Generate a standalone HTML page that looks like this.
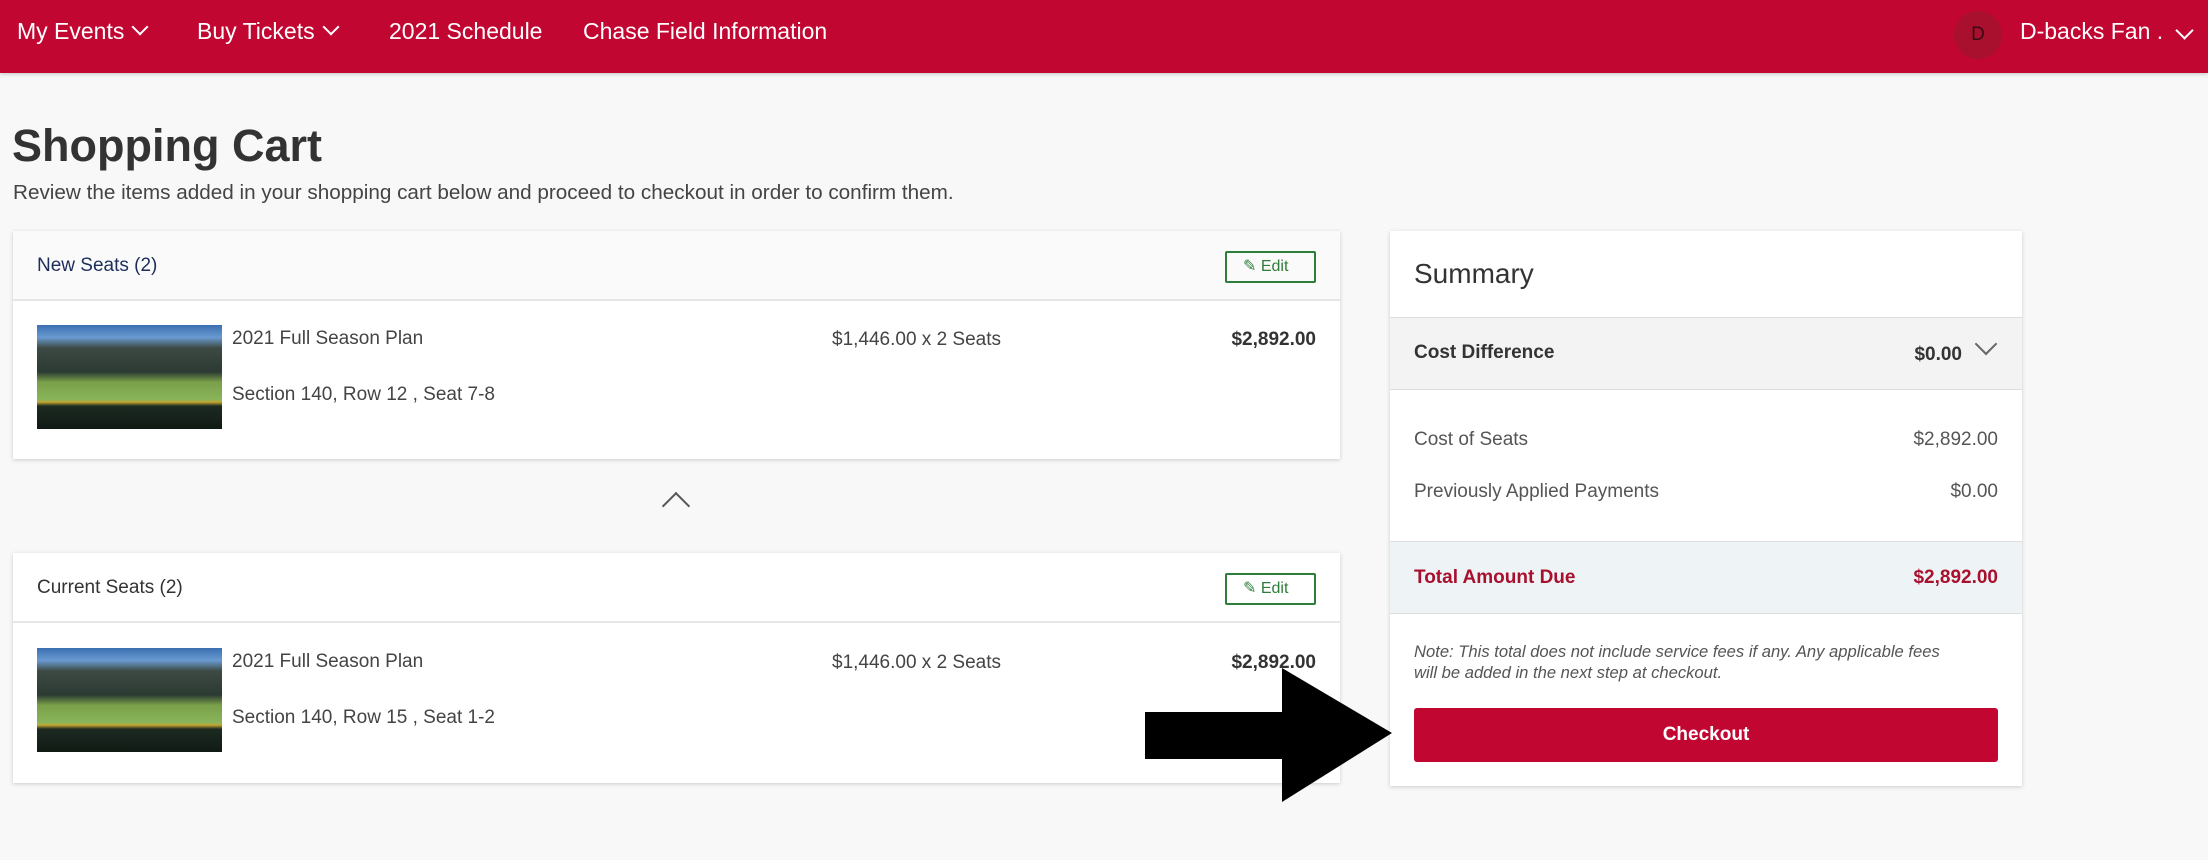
<!DOCTYPE html>
<html><head><meta charset="utf-8"><style>
*{margin:0;padding:0;box-sizing:border-box}
body{width:2208px;height:860px;background:#f8f8f8;font-family:"Liberation Sans",sans-serif;color:#333;position:relative;overflow:hidden}
.abs{position:absolute;white-space:nowrap}
.nav{position:absolute;left:0;top:0;width:2208px;height:73px;background:#c20632;box-shadow:0 2px 3px rgba(0,0,0,.15)}
.nav .i{position:absolute;top:18px;color:#fff;font-size:23px}
.chev{display:inline-block;width:12px;height:12px;border-right:2px solid #fff;border-bottom:2px solid #fff;transform:rotate(45deg);margin-left:10px;position:relative;top:-6px}
.card{position:absolute;background:#fff;box-shadow:0 1px 4px rgba(0,0,0,.18)}
.hd{position:absolute;left:0;right:0;top:0;height:70px;border-bottom:2px solid #e6e6e6;background:#fafafa}
.edit{position:absolute;right:24px;top:20px;width:91px;height:32px;border:2px solid #2e7d3a;border-radius:2px;color:#2e7d3a;font-size:16px;line-height:28px;padding-left:16px}
.img{position:absolute;left:24px;width:185px;height:104px;background:linear-gradient(180deg,#3a6fb0 0%,#6a9ad0 12%,#3d4a44 22%,#2b3a32 45%,#7aa04a 55%,#8ab55a 72%,#c8a830 74%,#1c2a22 78%,#101a14 100%)}
.t{font-size:19px;color:#444}
.row{position:absolute;left:20px;right:20px;font-size:19px;color:#555}
</style></head><body>
<div class="nav">
 <div class="i" style="left:17px">My Events<span class="chev"></span></div>
 <div class="i" style="left:197px">Buy Tickets<span class="chev"></span></div>
 <div class="i" style="left:389px">2021 Schedule</div>
 <div class="i" style="left:583px">Chase Field Information</div>
 <div class="abs" style="left:1954px;top:11px;width:48px;height:48px;border-radius:50%;background:#a8102e;color:#3a0a12;font-size:19px;text-align:center;line-height:48px">D</div>
 <div class="i" style="left:2020px">D-backs Fan .</div>
 <div class="abs" style="left:2178px;top:24px;width:13px;height:13px;border-right:2px solid #fff;border-bottom:2px solid #fff;transform:rotate(45deg)"></div>
</div>
<div class="abs" style="left:12px;top:120px;font-size:45px;font-weight:bold;color:#333">Shopping Cart</div>
<div class="abs" style="left:13px;top:181px;font-size:20.7px;color:#444">Review the items added in your shopping cart below and proceed to checkout in order to confirm them.</div>

<div class="card" style="left:13px;top:231px;width:1327px;height:228px">
 <div class="hd"><div class="abs" style="left:24px;top:24px;font-size:19px;color:#1d2e5a">New Seats (2)</div><div class="edit">✎ Edit</div></div>
 <div class="img" style="top:94px"></div>
 <div class="abs t" style="left:219px;top:97px">2021 Full Season Plan</div>
 <div class="abs t" style="left:219px;top:153px">Section 140, Row 12 , Seat 7-8</div>
 <div class="abs t" style="left:819px;top:98px">$1,446.00 x 2 Seats</div>
 <div class="abs t" style="right:24px;top:98px;font-weight:bold;color:#333">$2,892.00</div>
</div>
<div class="abs" style="left:666px;top:496px;width:20px;height:20px;border-left:2px solid #555;border-top:2px solid #555;transform:rotate(45deg)"></div>
<div class="card" style="left:13px;top:553px;width:1327px;height:230px">
 <div class="hd" style="background:#fff"><div class="abs" style="left:24px;top:24px;font-size:19px;color:#333">Current Seats (2)</div><div class="edit">✎ Edit</div></div>
 <div class="img" style="top:95px"></div>
 <div class="abs t" style="left:219px;top:98px">2021 Full Season Plan</div>
 <div class="abs t" style="left:219px;top:154px">Section 140, Row 15 , Seat 1-2</div>
 <div class="abs t" style="left:819px;top:99px">$1,446.00 x 2 Seats</div>
 <div class="abs t" style="right:24px;top:99px;font-weight:bold;color:#333">$2,892.00</div>
</div>

<div class="card" style="left:1390px;top:231px;width:632px;height:555px">
 <div class="abs" style="left:24px;top:27px;font-size:28px;color:#333">Summary</div>
 <div class="abs" style="left:0;right:0;top:86px;height:73px;background:#f3f3f3;border-top:1px solid #ddd;border-bottom:1px solid #ddd">
  <div class="abs" style="left:24px;top:24px;font-size:19px;font-weight:600;color:#333">Cost Difference</div>
  <div class="abs" style="right:60px;top:26px;font-size:19px;font-weight:600;color:#333">$0.00</div>
  <div class="abs" style="right:28px;top:18px;width:16px;height:16px;border-right:2px solid #666;border-bottom:2px solid #666;transform:rotate(45deg)"></div>
 </div>
 <div class="row" style="top:198px;left:24px;right:24px">Cost of Seats<span style="float:right">$2,892.00</span></div>
 <div class="row" style="top:250px;left:24px;right:24px">Previously Applied Payments<span style="float:right">$0.00</span></div>
 <div class="abs" style="left:0;right:0;top:310px;height:73px;background:#eef3f6;border-top:1px solid #ddd;border-bottom:1px solid #ddd">
  <div class="abs" style="left:24px;top:25px;font-size:19px;font-weight:bold;color:#a8102e;left:24px;right:24px">Total Amount Due<span style="float:right">$2,892.00</span></div>
 </div>
 <div class="abs" style="left:24px;top:410px;font-size:16.6px;font-style:italic;color:#555;line-height:21px">Note: This total does not include service fees if any. Any applicable fees<br>will be added in the next step at checkout.</div>
 <div class="abs" style="left:24px;right:24px;top:477px;height:54px;background:#c20632;border-radius:3px;color:#fff;font-size:19px;font-weight:bold;text-align:center;line-height:54px">Checkout</div>
</div>

<svg class="abs" style="left:0;top:0" width="2208" height="860"><polygon points="1145,712 1282,712 1282,668 1392,733 1282,802 1282,759 1145,759" fill="#000"/></svg>
</body></html>
